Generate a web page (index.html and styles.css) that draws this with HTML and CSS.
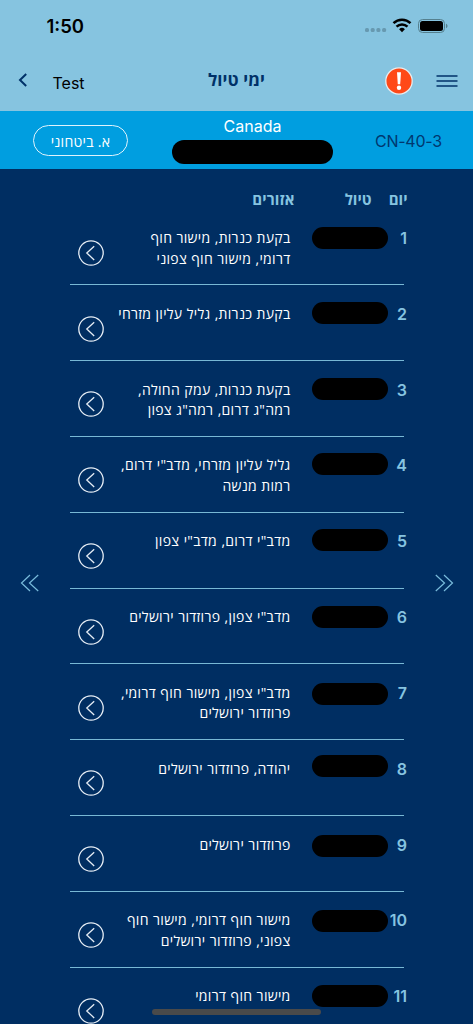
FILE: index.html
```html
<!DOCTYPE html>
<html lang="he">
<head>
<meta charset="utf-8">
<title>ימי טיול</title>
<link rel="stylesheet" href="styles.css">
</head>
<body>
<svg class="defs" width="0" height="0">
  <symbol id="go" viewBox="0 0 26 26"><circle cx="13" cy="13" r="12.2"/><path d="M16.2 6.3 8.8 13l7.4 6.9"/></symbol>
</svg>
<div class="screen">
  <header class="top">
    <div class="status">
      <span class="time">1:50</span>
      <svg class="status-icons" width="84" height="16" viewBox="0 0 84 16">
        <g fill="#6799b0"><rect x="0" y="10" width="4" height="4" rx="1.5"/><rect x="5.7" y="10" width="4" height="4" rx="1.5"/><rect x="11.4" y="10" width="4" height="4" rx="1.5"/><rect x="17.1" y="10" width="4" height="4" rx="1.5"/></g>
        <g fill="none" stroke="#000" stroke-width="2.5"><path d="M28.5 5.1a12.2 12.2 0 0 1 17 0"/><path d="M31.5 8.6a8 8 0 0 1 11 0"/></g>
        <path d="M34.1 11.2a4.2 4.2 0 0 1 5.8 0L37 14.3z"/>
        <rect x="53.5" y="1.5" width="26" height="13" rx="4" fill="none" stroke="#55808f"/>
        <rect x="55" y="3" width="23" height="10" rx="2.5"/>
        <path d="M81 5.8c2 .7 2 3.700 0 4.400z" fill="#55808f"/>
      </svg>
    </div>
    <nav class="nav">
      <svg class="back" width="10" height="16" viewBox="0 0 10 16"><path d="M8.200 2 2 8l6.200 6"/></svg>
      <span class="account">Test</span>
      <h1 class="title" dir="rtl">ימי טיול</h1>
      <svg class="alert" width="28" height="28" viewBox="0 0 28 28"><circle cx="14" cy="14" r="13.200" fill="#ff4917" stroke="#e6edf0" stroke-width="1.300"/><path d="M12 5.200h4l-.8 12.100h-2.400z" fill="#fff"/><circle cx="14" cy="20.800" r="2.200" fill="#fff"/></svg>
      <svg class="menu" width="22" height="14" viewBox="0 0 22 14"><path d="M.5 2h21M.5 7h21M.5 12h21"/></svg>
    </nav>
  </header>
  <section class="trip">
    <button class="security" dir="rtl"><span>א. ביטחוני</span></button>
    <div class="group"><span class="country">Canada</span><span class="group-name"></span></div>
    <span class="code">CN-40-3</span>
  </section>
  <main class="body">
    <svg class="pager" width="20" height="18" viewBox="0 0 20 18"><path d="M10 1 1.500 9l8.500 8M18.200 1 9.500 9l8.700 8"/></svg>
    <div class="days">
      <div class="heads"><span class="h-areas">אזורים</span><span class="h-trip">טיול</span><span class="h-day">יום</span></div>
      <div class="row"><svg class="go"><use href="#go"/></svg><p class="areas" dir="rtl"><span>בקעת כנרות, מישור חוף</span><br><span>דרומי, מישור חוף צפוני</span></p><i class="pill"></i><b>1</b></div>
      <div class="row"><svg class="go"><use href="#go"/></svg><p class="areas" dir="rtl"><span>בקעת כנרות, גליל עליון מזרחי</span></p><i class="pill"></i><b>2</b></div>
      <div class="row"><svg class="go"><use href="#go"/></svg><p class="areas" dir="rtl"><span>בקעת כנרות, עמק החולה,</span><br><span>רמה"ג דרום, רמה"ג צפון</span></p><i class="pill"></i><b>3</b></div>
      <div class="row"><svg class="go"><use href="#go"/></svg><p class="areas" dir="rtl"><span>גליל עליון מזרחי, מדב"י דרום,</span><br><span>רמות מנשה</span></p><i class="pill"></i><b>4</b></div>
      <div class="row"><svg class="go"><use href="#go"/></svg><p class="areas" dir="rtl"><span>מדב"י דרום, מדב"י צפון</span></p><i class="pill"></i><b>5</b></div>
      <div class="row"><svg class="go"><use href="#go"/></svg><p class="areas" dir="rtl"><span>מדב"י צפון, פרוזדור ירושלים</span></p><i class="pill"></i><b>6</b></div>
      <div class="row"><svg class="go"><use href="#go"/></svg><p class="areas" dir="rtl"><span>מדב"י צפון, מישור חוף דרומי,</span><br><span>פרוזדור ירושלים</span></p><i class="pill"></i><b>7</b></div>
      <div class="row"><svg class="go"><use href="#go"/></svg><p class="areas" dir="rtl"><span>יהודה, פרוזדור ירושלים</span></p><i class="pill"></i><b>8</b></div>
      <div class="row"><svg class="go"><use href="#go"/></svg><p class="areas" dir="rtl"><span>פרוזדור ירושלים</span></p><i class="pill"></i><b>9</b></div>
      <div class="row"><svg class="go"><use href="#go"/></svg><p class="areas" dir="rtl"><span>מישור חוף דרומי, מישור חוף</span><br><span>צפוני, פרוזדור ירושלים</span></p><i class="pill"></i><b>10</b></div>
      <div class="row"><svg class="go"><use href="#go"/></svg><p class="areas" dir="rtl"><span>מישור חוף דרומי</span></p><i class="pill"></i><b>11</b></div>
    </div>
    <svg class="pager" width="20" height="18" viewBox="0 0 20 18"><path d="M1.800 1l8.700 8-8.700 8M10 1l8.500 8-8.500 8"/></svg>
  </main>
  <div class="home-bar"></div>
</div>
</body>
</html>
```
FILE: styles.css
```css
* { box-sizing: border-box; }
body { margin: 0; overflow: hidden; font-family: Inter, "Open Sans", "DejaVu Sans", sans-serif; }
.defs { display: block; position: absolute; }
.screen { position: relative; width: 473px; height: 1024px; overflow: hidden; background: #002e62; display: flex; flex-direction: column; }
.top { height: 111px; flex: none; background: #86c4e0; }
.status { height: 52px; display: flex; justify-content: space-between; padding: 15px 24px 0 46.500px; }
.time { font-size: 18.500px; font-weight: 600; line-height: 23px; }
.status-icons { margin-top: 3px; }
.nav { height: 59px; display: grid; grid-template-columns: 35px 95px 177px 109px 25px; padding-left: 18px; align-items: center; }
.back { fill: none; stroke: #003168; stroke-width: 2; margin-bottom: 3px; }
.account { font-size: 16px; line-height: 24px; padding-top: 2px; margin-left: -.5px; }
.title { margin: 0 0 4px; text-align: center; font: 700 17px/24px "Open Sans", "DejaVu Sans", sans-serif; letter-spacing: .1px; color: #003168; }
.alert { justify-self: end; margin: 0 21px 1px 0; }
.menu { fill: none; stroke: #003168; stroke-width: 1.5; justify-self: end; margin: 0 1px 1px 0; }
.trip { height: 58px; flex: none; background: #009ee0; display: grid; grid-template-columns: 95px 161px 70px; column-gap: 44px; padding-left: 33px; }
.security { height: 31px; margin-top: 14px; padding: 2px 0 0; border: 1.300px solid #dff3fc; border-radius: 16px; background: none; color: #fff; font: 14px/20px "Open Sans", "DejaVu Sans", sans-serif; letter-spacing: .3px; }
.group { display: flex; flex-direction: column; align-items: center; padding-top: 5px; color: #fff; font-size: 16px; line-height: 20px; }
.group-name { width: 161px; height: 24px; margin-top: 4px; border-radius: 12px; background: #000; }
.code { color: #00376f; font-size: 16px; line-height: 24px; letter-spacing: -.25px; margin-top: 18px; margin-left: -2px; white-space: nowrap; }
.body { flex: 1; display: grid; grid-template-columns: 50px 339px 20px; padding-left: 20px; column-gap: 0; }
.pager { margin-top: 405px; fill: none; stroke: #79bcdc; stroke-width: 1.200; }
.pager:last-child { margin-left: 25px; }
.days { margin-left: -.5px; }
.heads { height: 40px; display: flex; direction: ltr; padding-top: 20px; color: #86c4e0; font: 700 15px/21px "Open Sans", "DejaVu Sans", sans-serif; }
.h-areas { width: 225px; text-align: right; letter-spacing: .1px; }
.h-trip { width: 77px; text-align: right; }
.h-day { width: 36px; text-align: right; }
.row { height: 75.820px; display: grid; grid-template-columns: 8px 26px 187px 21px 76px 20px; grid-template-rows: 75.820px 0; }
.row::after { content: ""; grid-row: 2; grid-column: 1 / -1; width: 334px; border-bottom: 1px solid #78b8d5; height: 1px; margin-top: -1.500px; }
.go { grid-column: 2; width: 26px; height: 26px; margin-top: 30.800px; fill: none; stroke: #e5edf5; stroke-width: 1.300; }
.areas { grid-column: 3; margin: 19px 0 0; color: #fff; font: 14px/20.500px "Open Sans", "DejaVu Sans", sans-serif; letter-spacing: .28px; word-spacing: .4px; white-space: nowrap; }
.pill { grid-column: 5; width: 76px; height: 22px; margin-top: 17px; border-radius: 11px; background: #000; }
.row b { grid-column: 6; justify-self: end; padding-right: .5px; margin-top: 18px; color: #86c4e0; font: 600 16px/22px Inter, sans-serif; }
.row:nth-child(2) .pill, .row:nth-child(7) .pill { margin-top: 18px; }
.row:nth-child(8) .pill, .row:nth-child(10) .pill { margin-top: 19px; }
.row:nth-child(9) .pill { margin-top: 15px; }
.row:nth-child(11) .pill, .row:nth-child(12) .pill { margin-top: 18.300px; }
.home-bar { position: absolute; left: 152px; top: 1009px; width: 169px; height: 5.500px; border-radius: 3px; background: #4a4a4a; }
```
